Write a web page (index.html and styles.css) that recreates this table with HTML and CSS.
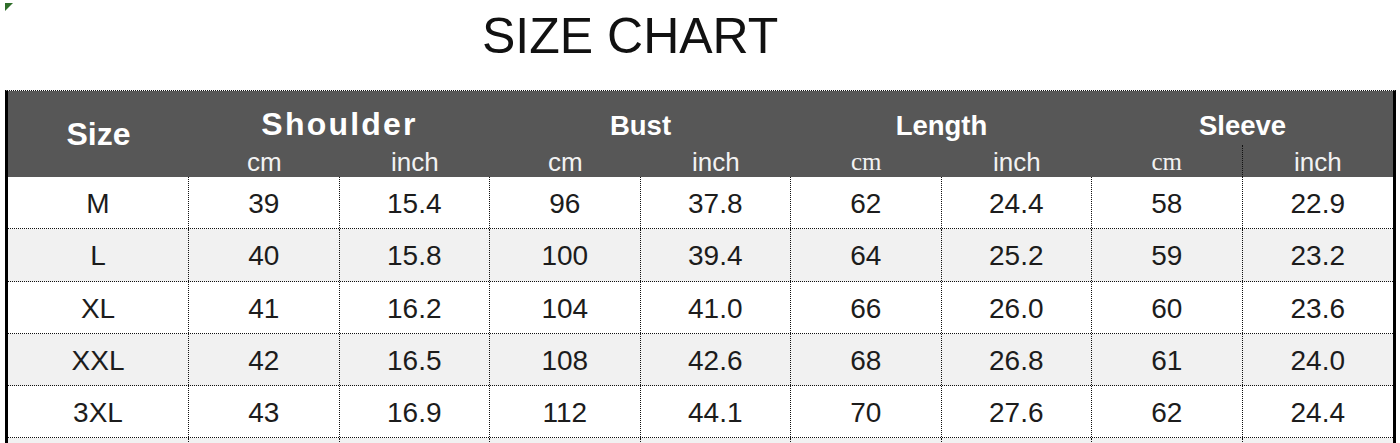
FILE: index.html
```html
<!DOCTYPE html>
<html lang="en">
<head>
<meta charset="utf-8">
<title>Size Chart</title>
<link rel="stylesheet" href="styles.css">
</head>
<body>
<div class="page">
  <div class="mark"></div>
  <h1 class="title">SIZE CHART</h1>
  <div class="chart">
    <div class="head">
      <div class="h-size">Size</div>
      <div class="h-group big">Shoulder</div>
      <div class="h-group">Bust</div>
      <div class="h-group">Length</div>
      <div class="h-group">Sleeve</div>
      <div class="h-unit">cm</div>
      <div class="h-unit">inch</div>
      <div class="h-unit">cm</div>
      <div class="h-unit">inch</div>
      <div class="h-unit serif">cm</div>
      <div class="h-unit">inch</div>
      <div class="h-unit serif divider">cm</div>
      <div class="h-unit">inch</div>
    </div>
    <div class="rows">
      <div class="row"><div>M</div><div>39</div><div>15.4</div><div>96</div><div>37.8</div><div>62</div><div>24.4</div><div>58</div><div>22.9</div></div>
      <div class="row"><div>L</div><div>40</div><div>15.8</div><div>100</div><div>39.4</div><div>64</div><div>25.2</div><div>59</div><div>23.2</div></div>
      <div class="row"><div>XL</div><div>41</div><div>16.2</div><div>104</div><div>41.0</div><div>66</div><div>26.0</div><div>60</div><div>23.6</div></div>
      <div class="row"><div>XXL</div><div>42</div><div>16.5</div><div>108</div><div>42.6</div><div>68</div><div>26.8</div><div>61</div><div>24.0</div></div>
      <div class="row"><div>3XL</div><div>43</div><div>16.9</div><div>112</div><div>44.1</div><div>70</div><div>27.6</div><div>62</div><div>24.4</div></div>
      <div class="row"><div></div><div></div><div></div><div></div><div></div><div></div><div></div><div></div><div></div></div>
    </div>
  </div>
</div>
</body>
</html>
```
FILE: styles.css
```css
* { box-sizing: border-box; }
html, body { margin: 0; padding: 0; background: #fff; }
body { font-family: "Liberation Sans", Arial, sans-serif; color: #1c1c1c; overflow: hidden; }

.page { padding: 3px 0 0 5px; }

.mark {
  width: 0; height: 0;
  border-top: 8px solid #2f6e2a;
  border-right: 8px solid transparent;
}

.title {
  margin: 0 0 0 477px;
  font-size: 50px;
  line-height: 50px;
  font-weight: normal;
  color: #111;
  height: 50px;
}

.chart {
  margin-top: 29px;
  width: 1391px;
  border-left: 3px solid #000;
  border-right: 3px solid #000;
  border-top: 1px dotted #111;
}

.head {
  display: grid;
  grid-template-columns: 181px repeat(8, 1fr);
  grid-template-rows: 54px 32px;
  background: #575757;
  color: #fff;
}

.h-size {
  grid-row: span 2;
  display: flex;
  align-items: center;
  justify-content: center;
  font-size: 32px;
  font-weight: bold;
}

.h-group {
  grid-column: span 2;
  display: flex;
  align-items: flex-end;
  justify-content: center;
  font-size: 27.5px;
  font-weight: bold;
  line-height: 32px;
  padding-bottom: 3px;
}

.h-group.big {
  font-size: 32px;
  letter-spacing: 2.2px;
  padding-bottom: 5px;
}

.h-unit {
  text-align: center;
  font-size: 26px;
  line-height: 32px;
  padding-top: 1px;
  color: #f2f2f2;
}

.h-unit.serif {
  font-family: "Liberation Serif", "Times New Roman", serif;
  font-size: 25px;
}

.h-unit.divider { border-right: 1px dotted #111; }

.row {
  display: grid;
  grid-template-columns: 181px repeat(8, 1fr);
  height: 52.25px;
  border-bottom: 1px dotted #111;
  background: #fff;
}

.row:nth-child(even) { background: #f1f1f1; }

.row > div {
  display: flex;
  align-items: center;
  justify-content: center;
  font-size: 28px;
  padding-top: 3px;
  border-right: 1px dotted #111;
}

.row > div:last-child { border-right: none; }
```
